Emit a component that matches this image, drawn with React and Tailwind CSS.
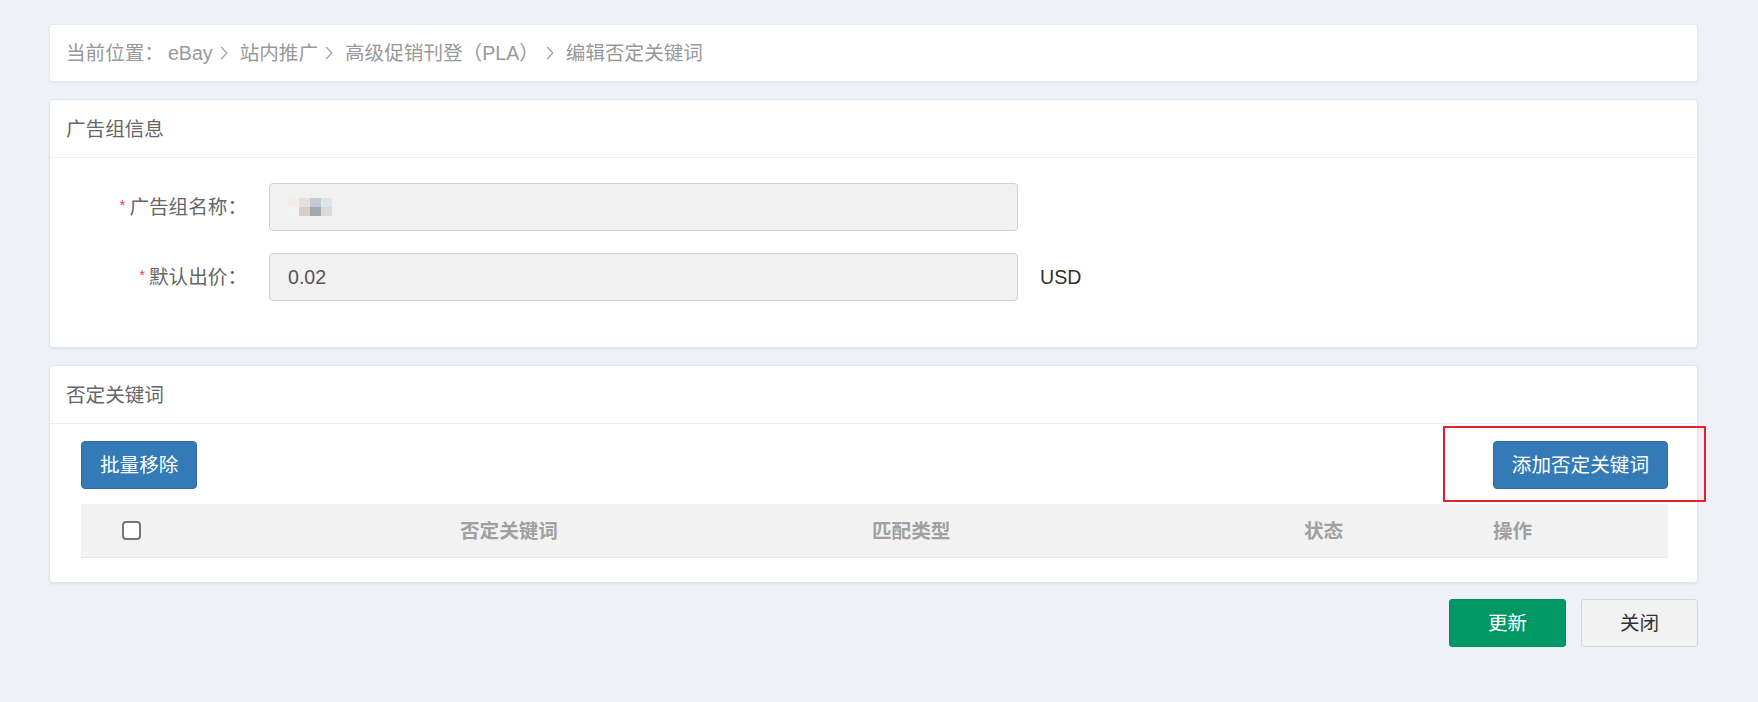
import { useState } from 'react'

const crumbs = ['eBay', '站内推广', '高级促销刊登（PLA）', '编辑否定关键词']

// blurred mosaic that hides the real ad group name
const mosaic = [
  ['#f3eeee', '#e6dede', '#c3cad3', '#dde4ec'],
  ['#f4f2f2', '#d8cece', '#a4a9b1', '#dcd9d9'],
]

function Chevron() {
  return (
    <svg width="8" height="14" viewBox="0 0 8 14" className="ml-[7px] mr-[12px] shrink-0">
      <path d="M1.2 1 L6.8 7 L1.2 13" fill="none" stroke="#a3a3a3" strokeWidth="1.3" />
    </svg>
  )
}

function Panel({ title, children }) {
  return (
    <section className="rounded-[4px] border border-[#e2e5ec] bg-white shadow-[0_1px_3px_rgba(0,0,0,0.07)]">
      <div className="flex h-[58px] items-center border-b border-[#eceef2] px-[16px] text-[#666]">{title}</div>
      {children}
    </section>
  )
}

function Field({ label, children, suffix }) {
  return (
    <div className="flex items-center">
      <label className="flex w-[181px] shrink-0 items-center justify-end text-[#666]">
        <span className="mr-[4px] self-start pt-[2px] font-['Liberation_Sans',sans-serif] text-[15px] leading-none text-[#e8434b]">*</span>
        {label}
      </label>
      <div className="ml-[22px] flex h-[48px] w-[749px] items-center rounded-[4px] border border-[#d0d0d0] bg-[#f1f1f1] px-[18px] text-[#555]">
        {children}
      </div>
      {suffix && <span className="ml-[22px] text-[#333]">{suffix}</span>}
    </div>
  )
}

export default function App() {
  const [checked, setChecked] = useState(false)

  return (
    <div className="min-h-[702px] bg-[#eef1f8] pb-[56px] pl-[49px] pr-[60px] pt-[24px] font-['Liberation_Sans','Noto_Sans_CJK_SC',sans-serif] text-[19.6px] leading-[24px]">
      <div className="flex h-[58px] items-center rounded-[3px] border border-[#e6e9ef] bg-white px-[16px] text-[#999] shadow-[0_1px_2px_rgba(0,0,0,0.05)]">
        <span>当前位置：</span>
        <span className="ml-[4px]">{crumbs[0]}</span>
        {crumbs.slice(1).map((c) => (
          <span key={c} className="flex items-center">
            <Chevron />
            <span>{c}</span>
          </span>
        ))}
      </div>

      <div className="mt-[17px]">
        <Panel title="广告组信息">
          <div className="flex flex-col gap-[22px] pb-[46px] pl-[16px] pt-[25px]">
            <Field label="广告组名称：">
              <div className="flex flex-col blur-[0.4px]">
                {mosaic.map((row, i) => (
                  <div key={i} className="flex">
                    {row.map((c, j) => (
                      <span key={j} className="h-[9px] w-[11px]" style={{ backgroundColor: c }} />
                    ))}
                  </div>
                ))}
              </div>
            </Field>
            <Field label="默认出价：" suffix="USD">
              0.02
            </Field>
          </div>
        </Panel>
      </div>

      <div className="mt-[17px]">
        <Panel title="否定关键词">
          <div className="pb-[24px] pl-[31px] pr-[29px] pt-[17px]">
            <div className="flex items-center justify-between">
              <button className="h-[48px] rounded-[4px] border border-[#2e6da4] bg-[#337ab7] px-[18px] text-white">批量移除</button>
              <div className="relative">
                <button className="h-[48px] rounded-[4px] border border-[#2e6da4] bg-[#337ab7] px-[18px] text-white">添加否定关键词</button>
                <div className="pointer-events-none absolute -bottom-[13px] -left-[50px] -right-[38px] -top-[15px] border-2 border-[#e5202a]" />
              </div>
            </div>
            <div className="mt-[15px] grid h-[54px] grid-cols-[379px_412px_432px_189px_1fr] items-center border-b border-[#e3e3e3] bg-[#f2f2f2] font-bold text-[#a0a0a0]">
              <div className="pl-[41px]">
                <button
                  onClick={() => setChecked((v) => !v)}
                  className={`block h-[19px] w-[19px] rounded-[4px] border-2 border-[#767676] ${checked ? 'bg-[#337ab7]' : 'bg-white'}`}
                  aria-label="全选"
                />
              </div>
              <div>否定关键词</div>
              <div>匹配类型</div>
              <div>状态</div>
              <div>操作</div>
            </div>
          </div>
        </Panel>
      </div>

      <div className="mt-[16px] flex justify-end gap-[15px]">
        <button className="h-[48px] w-[117px] rounded-[3px] border border-[#008f5c] bg-[#009966] text-white">更新</button>
        <button className="h-[48px] w-[117px] rounded-[3px] border border-[#d6d6d6] bg-[#f2f2f2] text-[#333]">关闭</button>
      </div>
    </div>
  )
}
